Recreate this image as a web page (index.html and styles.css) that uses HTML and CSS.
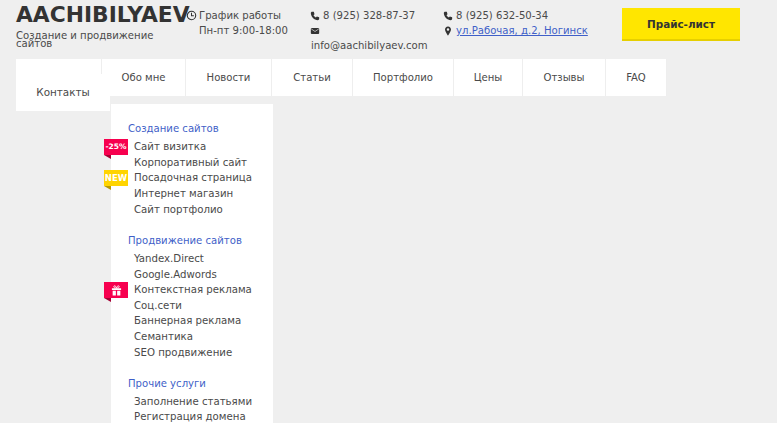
FILE: index.html
```html
<!DOCTYPE html>
<html lang="ru">
<head>
<meta charset="utf-8">
<title>AACHIBILYAEV</title>
<link rel="stylesheet" href="styles.css">
</head>
<body>
<div class="page">
  <header class="header">
    <div class="brand">
      <div class="logo">AACHIBILYAEV</div>
      <div class="tagline">Создание и продвижение сайтов</div>
    </div>
    <div class="info info-hours">
      <div class="line"><svg class="ico clock" viewBox="0 0 12 12"><circle cx="6" cy="6" r="4.6" fill="none" stroke="#333" stroke-width="1.2"/><path d="M6 3v3.2h2.6" fill="none" stroke="#333" stroke-width="1.1"/></svg>График работы</div>
      <div class="line indent">Пн-пт 9:00-18:00</div>
    </div>
    <div class="info info-contact">
      <div class="line"><svg class="ico" viewBox="0 0 12 12"><path d="M2.6 1 4.6 1 5.4 3.8 4.2 5C4.8 6.2 5.8 7.2 7 7.8L8.2 6.6 11 7.4 11 9.4C11 10.4 10.2 11 9.4 11 5 10.8 1.2 7 1 2.6 1 1.8 1.6 1 2.6 1Z" fill="#333"/></svg>8 (925) 328-87-37</div>
      <div class="line"><svg class="ico" viewBox="0 0 12 12"><rect x="1" y="2.5" width="10" height="7" rx="1.2" fill="#333"/><path d="M1.5 3.5 6 6.6 10.500 3.500" fill="none" stroke="#eee" stroke-width=".8"/></svg></div>
      <div class="line email">info@aachibilyaev.com</div>
    </div>
    <div class="info info-address">
      <div class="line"><svg class="ico" viewBox="0 0 12 12"><path d="M2.6 1 4.6 1 5.4 3.8 4.2 5C4.8 6.2 5.8 7.2 7 7.8L8.2 6.6 11 7.4 11 9.4C11 10.4 10.2 11 9.4 11 5 10.800 1.2 7 1 2.6 1 1.8 1.6 1 2.6 1Z" fill="#333"/></svg>8 (925) 632-50-34</div>
      <div class="line"><svg class="ico pin" viewBox="0 0 12 12"><path fill-rule="evenodd" d="M6 .5C3.800 .5 2.400 2.200 2.400 4.200 2.400 6.500 6 11.500 6 11.500S9.600 6.500 9.600 4.200C9.600 2.200 8.200 .5 6 .5ZM6 2.800A1.500 1.500 0 1 1 6 5.800 1.500 1.500 0 0 1 6 2.800Z" fill="#333"/></svg><a class="addr" href="#">ул.Рабочая, д.2, Ногинск</a></div>
    </div>
    <a class="price" href="#">Прайс-лист</a>
  </header>

  <nav class="nav">
    <a class="nav-item w-first" href="#"></a>
    <a class="nav-item w-about" href="#">Обо мне</a>
    <a class="nav-item w-news" href="#">Новости</a>
    <a class="nav-item w-art" href="#">Статьи</a>
    <a class="nav-item w-port" href="#">Портфолио</a>
    <a class="nav-item w-price" href="#">Цены</a>
    <a class="nav-item w-rev" href="#">Отзывы</a>
    <a class="nav-item w-faq" href="#">FAQ</a>
    <a class="nav-contacts" href="#">Контакты</a>
  </nav>

  <section class="menu">
    <h3 class="menu-title">Создание сайтов</h3>
    <ul class="menu-list">
      <li><span class="tag tag-red tag-sale">-25%</span>Сайт визитка</li>
      <li>Корпоративный сайт</li>
      <li><span class="tag tag-yellow">NEW</span>Посадочная страница</li>
      <li>Интернет магазин</li>
      <li>Сайт портфолио</li>
    </ul>
    <h3 class="menu-title">Продвижение сайтов</h3>
    <ul class="menu-list">
      <li>Yandex.Direct</li>
      <li>Google.Adwords</li>
      <li><span class="tag tag-red"><svg class="gift" viewBox="0 0 12 12"><path d="M1 3.500H11V5.500H1ZM1.800 6.300H5.300V11.500H1.800ZM6.700 6.300H10.200V11.500H6.700Z" fill="#fff"/><path d="M6 3.400C4.500 3.400 3 3 3 1.800 3 .6 5 .4 6 3 7 .4 9 .6 9 1.800 9 3 7.500 3.400 6 3.400Z" fill="none" stroke="#fff" stroke-width="1"/></svg></span>Контекстная реклама</li>
      <li>Соц.сети</li>
      <li>Баннерная реклама</li>
      <li>Семантика</li>
      <li>SEO продвижение</li>
    </ul>
    <h3 class="menu-title">Прочие услуги</h3>
    <ul class="menu-list">
      <li>Заполнение статьями</li>
      <li>Регистрация домена</li>
    </ul>
  </section>
</div>
</body>
</html>
```

FILE: styles.css
```css
* { box-sizing: border-box; }
html, body { margin: 0; padding: 0; height: 100%; overflow: hidden; }
body {
  background: #efefef;
  color: #4a4a4a;
  font: 10.1px/15px "DejaVu Sans", sans-serif;
}
a { color: inherit; text-decoration: none; }
.page { width: 777px; height: 423px; overflow: hidden; }

.header { display: flex; height: 59px; padding-left: 16px; position: relative; }
.brand { width: 170px; padding-top: 2px; }
.logo {
  font-size: 21.8px;
  line-height: 26px;
  font-weight: 700;
  color: #333;
  white-space: nowrap;
}
.tagline { width: 160px; margin-top: 4px; line-height: 8px; }

.info { padding-top: 8px; }
.line { height: 15px; white-space: nowrap; display: flex; align-items: center; }
.ico { width: 10px; height: 10px; margin-right: 3px; flex: none; }
.clock { width: 11px; height: 11px; margin-right: 2px; }
.indent { padding-left: 13px; }
.email { padding-left: 1px; }
.info-hours { width: 124px; }
.info-contact { width: 133px; }
.info-address { width: 179px; }
.pin { margin-right: 3px; }
.addr { color: #3f5fc8; text-decoration: underline; }

.price {
  display: flex;
  align-items: center;
  justify-content: center;
  width: 118px;
  height: 33px;
  margin-top: 8px;
  padding-top: 1px;
  background: #ffe600;
  border-bottom: 2px solid #e6cf00;
  color: #333;
  font-size: 10.4px;
  font-weight: 700;
}

.nav {
  display: flex;
  position: relative;
  width: 651px;
  height: 37px;
  margin-left: 16px;
  background: #fff;
}
.nav-item {
  display: flex;
  align-items: center;
  justify-content: center;
  border-right: 1px solid #eee;
}
.nav-item:last-of-type { border-right: 0; }
.w-first { width: 86px; }
.w-about { width: 84px; }
.w-news { width: 86px; }
.w-art { width: 81px; }
.w-port { width: 101px; }
.w-price { width: 69px; }
.w-rev { width: 83px; }
.w-faq { width: 61px; }
.nav-contacts {
  position: absolute;
  left: 0;
  top: 15px;
  width: 94px;
  height: 37px;
  display: flex;
  align-items: center;
  justify-content: center;
  background: #fff;
  font-size: 10.4px;
}

.menu {
  position: relative;
  width: 162px;
  margin: 8px 0 0 111px;
  padding: 17px 0 0 17px;
  background: #fff;
  min-height: 340px;
}
.menu-title {
  margin: 0 0 2.25px;
  font-size: 10.1px;
  line-height: 16px;
  font-weight: 400;
  color: #3f5fc8;
}
.menu-list { list-style: none; margin: 0 0 15.5px; padding: 0 0 0 6px; }
.menu-list li {
  position: relative;
  height: 15.6px;
  line-height: 15.6px;
  font-size: 10.2px;
  white-space: nowrap;
}
.tag {
  position: absolute;
  left: -30px;
  top: 0;
  width: 24px;
  height: 16px;
  display: flex;
  align-items: center;
  justify-content: center;
  color: #fff;
  font-size: 8.5px;
  font-weight: 700;
}
.tag-sale { font-size: 7.5px; }
.tag::after {
  content: "";
  position: absolute;
  left: 0;
  bottom: -4px;
  border-top: 4px solid #a50035;
  border-left: 7px solid transparent;
}
.tag-red { background: #f7004f; }
.tag-yellow { background: #ffd400; }
.tag-yellow::after { border-top-color: #b89a00; }
.gift { width: 11px; height: 11px; }
```
